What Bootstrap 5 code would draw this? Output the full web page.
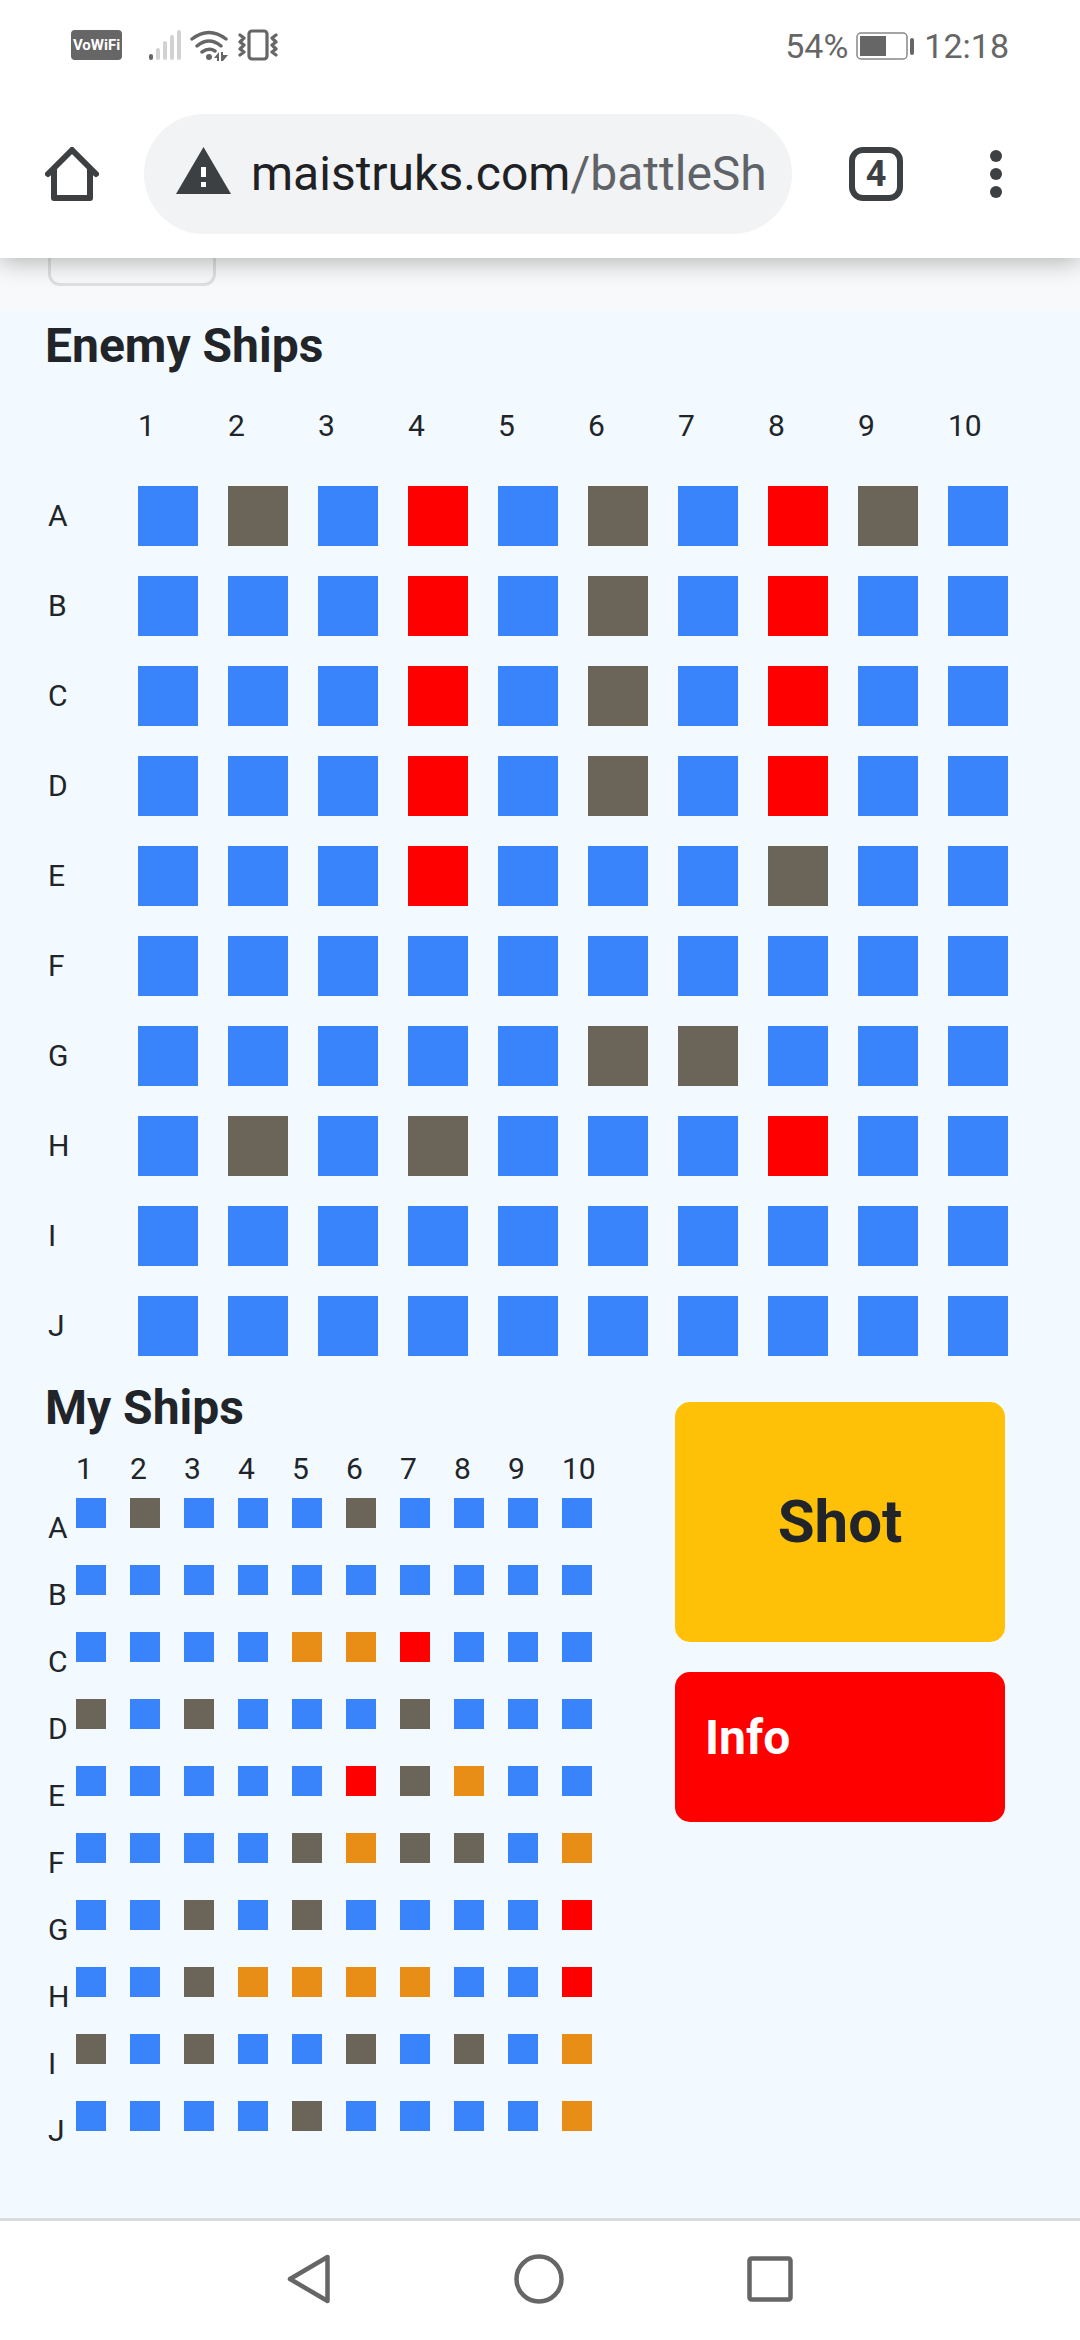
<!DOCTYPE html>
<html lang="en">
<head>
<meta charset="utf-8">
<meta name="viewport" content="width=device-width, initial-scale=1">
<title>Battleship</title>
<link href="https://cdn.jsdelivr.net/npm/bootstrap@5.3.0/dist/css/bootstrap.min.css" rel="stylesheet">
<style>
  body { font-family: Roboto, sans-serif; font-size: 30px; line-height: 40px; color: #212529; background: #f2f9ff; }
  svg { display: block; flex: none; }
  .status { height: 84px; padding: 0 71px; color: #666; font-size: 34px; }
  .status .left-icons { padding-bottom: 2px; }
  .vowifi { width: 51px; height: 30px; margin-right: 26px; border-radius: 4px; background: #666; color: #fff; font-family: "Liberation Sans Narrow", Roboto, sans-serif; font-size: 15px; line-height: 30px; }
  .toolbar { height: 174px; padding: 6px 78px 0 45px; }
  .omnibox { height: 120px; padding: 0 24px 0 32px; margin: 0 57px 0 45px; background: #f1f3f4; }
  .url { font-size: 48px; line-height: 60px; color: #202124; white-space: nowrap; margin-left: 20px; }
  .url span { color: #5f6368; }
  .tabs-btn { width: 54px; height: 54px; border: 6px solid #3c4043; border-radius: 14px; font-family: "Liberation Sans Narrow", Roboto, sans-serif; font-size: 36px; line-height: 42px; color: #3c4043; }
  .menu-btn { margin-left: 87px; width: 12px; }
  .browser { background: #fff; box-shadow: 0 3px 24px rgba(0,0,0,.3); }
  .site-head { background: #f8f9fa; height: 53px; padding-left: 48px; }
  .toggler { width: 168px; height: 28px; border: 3px solid #dedfe0; border-top: 0; border-radius: 0 0 12px 12px; }
  .game { padding: 6px 45px 0; min-height: 1907px; }
  h2 { font-size: 48px; font-weight: 700; line-height: 58px; margin: 0; }
  .water, .miss, .hit, .ship { border: 0; padding: 0; display: block; }
  .water { background: #3984fb; }
  .miss { background: #6b6459; }
  .hit { background: #f00; }
  .ship { background: #e88e17; }
  .board { border-collapse: separate; border-spacing: 0; table-layout: fixed; }
  .board th { font-weight: 400; padding: 0; text-align: left; vertical-align: top; }
  .board td { padding: 0; vertical-align: top; }
  .board tbody th { padding: 10px 0 0 3px; }
  .enemy { width: 963px; }
  .enemy th, .enemy td { width: 90px; height: 90px; }
  .enemy thead th { height: 111px; padding-top: 31px; }
  .enemy tr > :first-child { width: 93px; }
  .enemy tr > :last-child { width: 60px; }
  .enemy tbody tr:last-child > * { height: 60px; }
  .enemy button { width: 60px; height: 60px; }
  .own { width: 571px; margin-top: 12px; }
  .own th, .own td { width: 54px; height: 67px; }
  .own thead th, .own thead td { height: 49px; }
  .own tr > :first-child { width: 31px; }
  .own button { width: 30px; height: 30px; }
  .lower { padding-top: 23px; }
  .side { width: 330px; padding-top: 23px; margin-right: 30px; gap: 30px; }
  .shot, .shot:hover { height: 240px; font-size: 60px; border-radius: 15px; color: #212529; }
  .info { height: 150px; padding: 37px 30px; border-radius: 15px; background: #f00; color: #fff; }
  .sysnav { height: 122px; padding-bottom: 3px; gap: 183px; border-top: 3px solid #d9dcdf; background: #fff; }
</style>
</head>
<body>
<header class="browser position-relative">
  <div class="status d-flex align-items-center justify-content-between pt-2">
    <div class="left-icons d-flex align-items-center">
      <span class="vowifi fw-bold text-center">VoWiFi</span>
      <svg width="34" height="32" viewBox="0 0 34 32" fill="none" stroke-width="4" stroke-linecap="round"><path stroke="#666" d="M3 27v2"/><path stroke="#d2d2d2" d="M10 21v8M17 14v15M24 8v21M31 3v26"/></svg>
      <svg class="ms-2" width="38" height="32" viewBox="0 0 38 32" fill="none" stroke="#666" stroke-width="3.4" stroke-linecap="round"><path d="M2 10q17-13 34 0M7 17q12-10 24 0M12 23q7-5 13-1"/><circle cx="19" cy="28" r="3" fill="#666" stroke="none"/><path fill="#666" stroke="none" d="M24 29l5-6v9h-2v-3zM31 23h2v3h5l-5 6h-2z"/></svg>
      <svg class="ms-2" width="42" height="32" viewBox="0 0 42 32" fill="none" stroke="#666" stroke-width="3.2" stroke-linecap="round" stroke-linejoin="round"><rect x="13" y="2" width="18" height="28" rx="3"/><path d="M4 6l4 3-4 4 4 3-4 4 4 3-4 3M40 6l-4 3 4 4-4 3 4 4-4 3 4 3"/></svg>
    </div>
    <div class="d-flex align-items-center">
      <span>54%</span>
      <svg class="mx-2" width="60" height="28" viewBox="0 0 60 28"><rect x="1" y="1" width="50" height="26" rx="4" fill="none" stroke="#888" stroke-width="1.5"/><path fill="#666" d="M4 4h26v20H4z"/><rect x="54" y="6" width="4" height="17" rx="2" fill="#666"/></svg>
      <span>12:18</span>
    </div>
  </div>
  <div class="toolbar d-flex align-items-center">
    <button class="btn p-0 border-0" aria-label="Home"><svg width="54" height="54" viewBox="0 0 54 54" fill="none" stroke="#3c4043" stroke-width="6" stroke-linecap="round" stroke-linejoin="round"><path d="M3 27L27 3l24 24"/><path d="M9 23v28h36V23"/></svg></button>
    <div class="omnibox rounded-pill d-flex align-items-center flex-grow-1 overflow-hidden">
      <svg width="55" height="54" viewBox="0 0 55 54"><path fill="#3c4043" d="M27.500 0L55 47H0z"/><path fill="#fff" d="M25 20h5v10h-5zM25 35h5v5h-5z"/></svg>
      <div class="url">maistruks.com<span>/battleSh</span></div>
    </div>
    <button class="tabs-btn bg-white p-0 fw-bold text-center" aria-label="Tabs">4</button>
    <button class="menu-btn btn p-0 border-0" aria-label="Menu"><svg width="12" height="48" fill="#3c4043"><circle cx="6" cy="6" r="6"/><circle cx="6" cy="24" r="6"/><circle cx="6" cy="42" r="6"/></svg></button>
  </div>
</header>
<div class="site-head"><div class="toggler"></div></div>
<main class="game">
  <h2>Enemy Ships</h2>
  <table class="board enemy" data-rows="wmwhwmwhmw wwwhwmwhww wwwhwmwhww wwwhwmwhww wwwhwwwmww wwwwwwwwww wwwwwmmwww wmwmwwwhww wwwwwwwwww wwwwwwwwww"></table>
  <div class="lower d-flex justify-content-between align-items-start">
    <section>
      <h2>My Ships</h2>
      <table class="board own" data-rows="wmwwwmwwww wwwwwwwwww wwwwsshwww mwmwwwmwww wwwwwhmsww wwwwmsmmws wwmwmwwwwh wwmsssswwh mwmwwmwmws wwwwmwwwws"></table>
    </section>
    <aside class="side d-flex flex-column">
      <button class="shot btn btn-warning fw-bold border-0">Shot</button>
      <div class="info"><h2>Info</h2></div>
    </aside>
  </div>
</main>
<footer class="sysnav d-flex align-items-center justify-content-center">
  <svg width="44" height="50" viewBox="0 0 44 50" fill="none" stroke="#666" stroke-width="4.500" stroke-linejoin="round"><path d="M40.500 3v44L3 25z"/></svg>
  <svg width="50" height="50" fill="none" stroke="#666" stroke-width="4.500"><circle cx="25" cy="25" r="22.500"/></svg>
  <svg width="46" height="46" fill="none" stroke="#666" stroke-width="4.500"><rect x="2.500" y="2.500" width="41" height="41" rx="2"/></svg>
</footer>
<script src="https://cdn.jsdelivr.net/npm/bootstrap@5.3.0/dist/js/bootstrap.bundle.min.js"></script>
<script>
  const kinds = { w: 'water', m: 'miss', h: 'hit', s: 'ship' };
  document.querySelectorAll('.board').forEach(board => {
    let head = '<thead><tr><td></td>';
    for (let n = 1; n <= 10; n++) head += `<th scope="col">${n}</th>`;
    const rows = board.dataset.rows.split(' ').map((row, r) => {
      const letter = 'ABCDEFGHIJ'[r];
      return `<tr><th scope="row">${letter}</th>` + [...row].map((c, i) =>
        `<td><button class="${kinds[c]}" aria-label="${letter}${i + 1} ${kinds[c]}"></button></td>`).join('') + '</tr>';
    }).join('');
    board.innerHTML = head + '</tr></thead><tbody>' + rows + '</tbody>';
  });
</script>
</body>
</html>
